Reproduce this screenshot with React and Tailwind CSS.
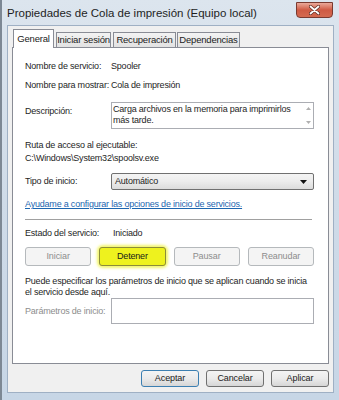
import React from "react";

const F = { fontFamily: '"Liberation Sans", Arial, sans-serif' };

function Btn({ children, disabled, className = "" }) {
  return (
    <div
      className={
        "flex items-center justify-center rounded-[3px] border text-[9px] tracking-[-0.1px] " +
        (disabled
          ? "border-[#b5b9bc] bg-[#f4f4f4] text-[#8d8d8d] "
          : "border-[#707070] bg-gradient-to-b from-[#f4f4f4] via-[#ebebeb] to-[#d6d6d6] text-[#1a1a1a] ") +
        className
      }
    >
      {children}
    </div>
  );
}

const tabCls =
  "h-[15px] border border-b-0 border-[#898c95] bg-gradient-to-b from-[#f3f3f3] to-[#e2e2e2] flex items-center justify-center text-[9.5px] tracking-[-0.2px] text-[#222]";

export default function App() {
  return (
    <div style={F} className="w-[339px] h-[400px] overflow-hidden bg-[#9aa3ad]">
      <div className="w-[339px] h-[400px] flex flex-col border-l-2 border-[#7d8894] bg-gradient-to-b from-[#dce5ee] via-[#cfdbe8] to-[#c7d6e6] px-[5px] pb-[7px]">
        {/* title bar */}
        <div className="h-[25px] flex items-start shrink-0">
          <div className="pt-[6px] text-[11.5px] leading-[15px] text-[#1e1e1e]">
            Propiedades de Cola de impresión (Equipo local)
          </div>
          <div className="ml-auto mr-[1px] mt-[2px] w-[37px] h-[16px] rounded-b-[4px] border border-[#7a3a30] bg-gradient-to-b from-[#e9a99a] via-[#cf5a43] to-[#d46a50] flex items-center justify-center">
            <svg width="11" height="10" viewBox="0 0 11 10">
              <path d="M1.5 1.5 L9.5 8.5 M9.5 1.5 L1.5 8.5" stroke="#5a2a22" strokeWidth="3.2" strokeLinecap="round" />
              <path d="M1.5 1.5 L9.5 8.5 M9.5 1.5 L1.5 8.5" stroke="#ffffff" strokeWidth="1.8" strokeLinecap="round" />
            </svg>
          </div>
        </div>

        {/* client area */}
        <div className="flex-1 flex flex-col bg-[#f0f0f0] border border-[#9fb0c4] pl-[4px] pr-[4px]">
          {/* tabs */}
          <div className="flex items-end h-[21px] pt-[2px] pl-[1px] shrink-0">
            <div className="relative z-10 -mb-[1px] h-[19px] w-[41px] bg-white border border-b-0 border-[#898c95] flex items-center justify-center text-[9.5px] tracking-[-0.2px] text-[#222]">
              General
            </div>
            <div className={"ml-[2px] w-[55px] " + tabCls}>Iniciar sesión</div>
            <div className={"ml-[2px] w-[63px] " + tabCls}>Recuperación</div>
            <div className={"ml-[1px] w-[63px] " + tabCls}>Dependencias</div>
          </div>

          {/* panel */}
          <div className="h-[317px] bg-white border border-[#898c95] pt-[12px] pl-[12px] pr-[14px] text-[9px] tracking-[-0.2px] text-[#1e1e1e] shrink-0">
            <div className="flex h-[13px] leading-[13px]">
              <div className="w-[86px]">Nombre de servicio:</div>
              <div>Spooler</div>
            </div>
            <div className="flex h-[13px] leading-[13px] mt-[6px]">
              <div className="w-[86px]">Nombre para mostrar:</div>
              <div>Cola de impresión</div>
            </div>
            <div className="flex mt-[10px]">
              <div className="w-[86px] pt-[3px] leading-[13px]">Descripción:</div>
              <div className="flex-1 h-[27px] border border-[#abadb3] flex">
                <div className="flex-1 pl-[1px] leading-[11px] pt-[1px] pr-[10px]">
                  Carga archivos en la memoria para imprimirlos más tarde.
                </div>
                <div className="w-[10px] flex flex-col items-center justify-between py-[4px]">
                  <svg width="5" height="3" viewBox="0 0 5 3"><path d="M0 3 L2.5 0 L5 3Z" fill="#b0b0b0" /></svg>
                  <svg width="5" height="3" viewBox="0 0 5 3"><path d="M0 0 L2.5 3 L5 0Z" fill="#b0b0b0" /></svg>
                </div>
              </div>
            </div>
            <div className="mt-[10px] h-[13px] leading-[13px]">Ruta de acceso al ejecutable:</div>
            <div className="h-[12px] leading-[12px]">C:\Windows\System32\spoolsv.exe</div>
            <div className="flex mt-[9px] h-[17px]">
              <div className="w-[86px] leading-[17px]">Tipo de inicio:</div>
              <div className="flex-1 rounded-[2px] border border-[#707070] bg-gradient-to-b from-[#f4f4f4] via-[#ececec] to-[#dcdcdc] flex items-center pl-[3px] pr-[6px]">
                <span>Automático</span>
                <svg className="ml-auto" width="7" height="4" viewBox="0 0 7 4"><path d="M0 0 L7 0 L3.5 4Z" fill="#111" /></svg>
              </div>
            </div>
            <div className="mt-[7px] h-[14px] leading-[14px] text-[#1c66b0] underline">
              Ayudame a configurar las opciones de inicio de servicios.
            </div>
            <div className="mt-[8px] h-px bg-[#a0a0a0] mr-[2px]"></div>
            <div className="flex mt-[6px] h-[14px] leading-[14px]">
              <div className="w-[88px]">Estado del servicio:</div>
              <div>Iniciado</div>
            </div>
            <div className="grid grid-cols-4 gap-x-[8px] mt-[7px] h-[19px]">
              <Btn disabled>Iniciar</Btn>
              <div className="rounded-[4px] bg-[#eef22a] shadow-[0_0_3px_2px_#f2f56a] flex">
                <div className="flex-1 flex items-center justify-center rounded-[3px] border border-[#8c8c3a] bg-[#eef21e] text-[9px] text-[#1a1a1a]">
                  Detener
                </div>
              </div>
              <Btn disabled>Pausar</Btn>
              <Btn disabled>Reanudar</Btn>
            </div>
            <div className="mt-[10px] leading-[11px] whitespace-nowrap">
              Puede especificar los parámetros de inicio que se aplican cuando se inicia
              <br />
              el servicio desde aquí.
            </div>
            <div className="flex h-[26px]">
              <div className="w-[86px] leading-[26px] text-[#8d8d8d] whitespace-nowrap">Parámetros de inicio:</div>
              <div className="flex-1 border border-[#abadb3] bg-white"></div>
            </div>
          </div>

          {/* bottom buttons */}
          <div className="flex justify-end gap-[7px] mt-[6px]">
            <Btn className="w-[58px] h-[17px] !border-[#3c7fb1]">Aceptar</Btn>
            <Btn className="w-[58px] h-[17px]">Cancelar</Btn>
            <Btn className="w-[58px] h-[17px]">Aplicar</Btn>
          </div>
        </div>
      </div>
    </div>
  );
}
